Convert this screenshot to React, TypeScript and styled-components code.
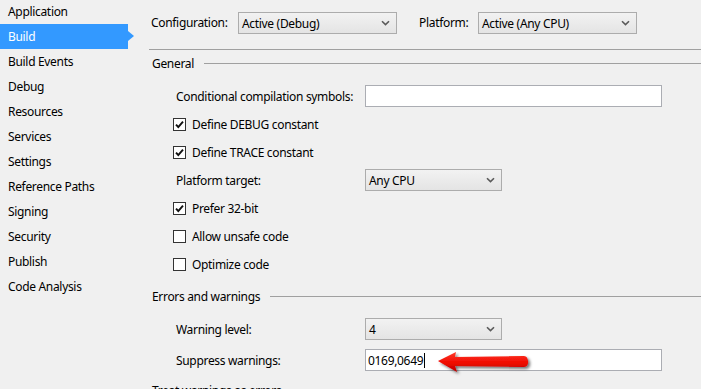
import React from "react";
import styled, {createGlobalStyle} from "styled-components";

const GlobalStyle = createGlobalStyle`
  html, body {
    margin: 0;
    padding: 0;
    background: #f0f0f0;
    overflow: hidden;
  }
  body {
    font-family: "Noto Sans", "Open Sans", sans-serif;
    font-size: 12px;
    letter-spacing: -0.32px;
    color: #000;
  }
`;

const navItems = [
  "Application",
  "Build",
  "Build Events",
  "Debug",
  "Resources",
  "Services",
  "Settings",
  "Reference Paths",
  "Signing",
  "Security",
  "Publish",
  "Code Analysis",
];

export default function App() {
  return (
    <>
      <GlobalStyle />
      <Page>
        <Sidebar>
          {navItems.map((item) => (
            <NavItem key={item} $active={item === "Build"}>
              {item}
            </NavItem>
          ))}
        </Sidebar>

        <Main>
          <Toolbar>
            <ToolbarLabel $width={87}>Configuration:</ToolbarLabel>
            <Select $width={159}>
              <span>Active (Debug)</span>
              <Chevron />
            </Select>
            <ToolbarLabel $width={59} $gap={22}>
              Platform:
            </ToolbarLabel>
            <Select $width={159}>
              <span>Active (Any CPU)</span>
              <Chevron />
            </Select>
          </Toolbar>

          <SectionHeader>General</SectionHeader>
          <Form $gap={6}>
            <Row>
              <Label>Conditional compilation symbols:</Label>
              <TextBox />
            </Row>
            <CheckRow>
              <CheckBox checked />
              Define DEBUG constant
            </CheckRow>
            <CheckRow>
              <CheckBox checked />
              Define TRACE constant
            </CheckRow>
            <Row>
              <Label>Platform target:</Label>
              <Select $width={137}>
                <span>Any CPU</span>
                <Chevron />
              </Select>
            </Row>
            <CheckRow>
              <CheckBox checked />
              Prefer 32-bit
            </CheckRow>
            <CheckRow>
              <CheckBox />
              Allow unsafe code
            </CheckRow>
            <CheckRow>
              <CheckBox />
              Optimize code
            </CheckRow>
          </Form>

          <SectionHeader $top={11}>Errors and warnings</SectionHeader>
          <Form $gap={9}>
            <Row>
              <Label>Warning level:</Label>
              <Select $width={137}>
                <span>4</span>
                <Chevron />
              </Select>
            </Row>
            <Row>
              <Label>Suppress warnings:</Label>
              <TextBox>
                0169,0649
                <Caret />
                <RedArrow />
              </TextBox>
            </Row>
          </Form>

          <SectionHeader $top={9}>Treat warnings as errors</SectionHeader>
        </Main>
      </Page>
    </>
  );
}

function Chevron() {
  return (
    <ChevronSvg width="9" height="6" viewBox="0 0 9 6">
      <path d="M1 1.2 L4.5 4.6 L8 1.2" fill="none" stroke="#5a5a5a" strokeWidth="1.6" />
    </ChevronSvg>
  );
}

function CheckBox({checked}: {checked?: boolean}) {
  return (
    <Box>
      {checked && (
        <svg width="11" height="11" viewBox="0 0 11 11">
          <path d="M2 5.6 L4.3 8 L9 2.6" fill="none" stroke="#111" strokeWidth="1.9" />
        </svg>
      )}
    </Box>
  );
}

function RedArrow() {
  return (
    <ArrowSvg width="100" height="32" viewBox="0 0 100 32">
      <defs>
        <linearGradient id="arrowFill" x1="0" y1="0" x2="0" y2="1">
          <stop offset="0" stopColor="#ff3b2a" />
          <stop offset="0.55" stopColor="#f00a00" />
          <stop offset="1" stopColor="#b80000" />
        </linearGradient>
        <filter id="arrowShadow" x="-10%" y="-30%" width="130%" height="180%">
          <feDropShadow dx="2" dy="2" stdDeviation="1.4" floodColor="#000" floodOpacity="0.55" />
        </filter>
      </defs>
      <path
        d="M2 14 L20 5 L19 10 L88 9 C93 9 94 20 88 20 L19 19 L21 25 Z"
        fill="url(#arrowFill)"
        filter="url(#arrowShadow)"
      />
    </ArrowSvg>
  );
}

const Page = styled.div`
  display: flex;
  width: 701px;
  height: 389px;
  overflow: hidden;
`;

const Sidebar = styled.nav`
  width: 149px;
  flex-shrink: 0;
  display: flex;
  flex-direction: column;
  margin-top: -1px;
`;

const NavItem = styled.div<{$active?: boolean}>`
  position: relative;
  flex-shrink: 0;
  height: 25px;
  width: 128px;
  box-sizing: border-box;
  display: flex;
  align-items: center;
  padding-left: 8px;
  background: ${(p) => (p.$active ? "#3399ff" : "transparent")};
  color: ${(p) => (p.$active ? "#fff" : "#000")};

  &::after {
    content: "";
    display: ${(p) => (p.$active ? "block" : "none")};
    position: absolute;
    right: -6px;
    top: 7px;
    border-top: 5px solid transparent;
    border-bottom: 5px solid transparent;
    border-left: 6px solid #3399ff;
  }
`;

const Main = styled.div`
  flex: 1;
  display: flex;
  flex-direction: column;
`;

const Toolbar = styled.div`
  flex-shrink: 0;
  height: 50px;
  box-sizing: border-box;
  border-bottom: 1px solid #a0a0a0;
  display: flex;
  align-items: flex-start;
  padding: 12px 0 0 2px;
`;

const ToolbarLabel = styled.div<{$width: number; $gap?: number}>`
  width: ${(p) => p.$width}px;
  margin-left: ${(p) => p.$gap ?? 0}px;
  height: 22px;
  line-height: 21px;
`;

const Select = styled.div<{$width: number}>`
  width: ${(p) => p.$width}px;
  height: 22px;
  box-sizing: border-box;
  border: 1px solid #acacac;
  background: linear-gradient(#f2f2f2, #e4e4e4);
  display: flex;
  align-items: center;
  justify-content: space-between;
  padding: 0 6px 0 3px;
`;

const ChevronSvg = styled.svg`
  display: block;
`;

const SectionHeader = styled.div<{$top?: number}>`
  flex-shrink: 0;
  display: flex;
  align-items: center;
  gap: 10px;
  height: 20px;
  margin: ${(p) => p.$top ?? 3}px 0 12px;
  padding-left: 3px;
  white-space: nowrap;

  &::after {
    content: "";
    flex: 1;
    height: 1px;
    background: #a0a0a0;
  }
`;

const Form = styled.div<{$gap: number}>`
  flex-shrink: 0;
  display: flex;
  flex-direction: column;
  gap: ${(p) => p.$gap}px;
  padding-left: 27px;
`;

const Row = styled.div`
  display: grid;
  grid-template-columns: 189px auto;
  align-items: center;
  height: 22px;
`;

const Label = styled.div`
  white-space: nowrap;
`;

const TextBox = styled.div`
  position: relative;
  width: 297px;
  height: 22px;
  box-sizing: border-box;
  border: 1px solid #abadb3;
  background: #fff;
  display: flex;
  align-items: center;
  padding-left: 2px;
`;

const Caret = styled.span`
  display: inline-block;
  width: 1px;
  height: 15px;
  background: #000;
  margin-left: 1px;
`;

const ArrowSvg = styled.svg`
  position: absolute;
  left: 70px;
  top: -3px;
  overflow: visible;
`;

const CheckRow = styled.label`
  display: flex;
  align-items: center;
  gap: 6px;
  height: 22px;
  margin-left: -3px;
`;

const Box = styled.span`
  width: 13px;
  height: 13px;
  box-sizing: border-box;
  border: 1px solid #333;
  background: #fff;
  display: flex;
  align-items: center;
  justify-content: center;
`;
